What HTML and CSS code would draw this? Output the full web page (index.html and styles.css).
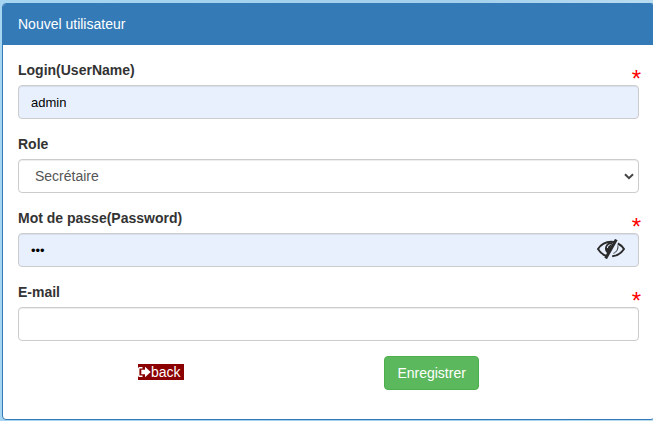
FILE: index.html
```html
<!DOCTYPE html>
<html lang="fr">
<head>
<meta charset="utf-8">
<title>Nouvel utilisateur</title>
<link rel="stylesheet" href="styles.css">
</head>
<body>
<main class="panel">
  <header class="panel-heading">Nouvel utilisateur</header>
  <form class="panel-body">
    <div class="form-group required">
      <label for="login">Login(UserName)</label>
      <input class="form-control filled" id="login" type="text" value="admin">
      <span class="mark" aria-hidden="true">*</span>
    </div>
    <div class="form-group">
      <label for="role">Role</label>
      <div class="control-wrap">
        <select class="form-control" id="role"><option>Secrétaire</option></select>
        <svg class="chevron" viewBox="0 0 10 7" aria-hidden="true"><path d="M1 1.2 5 5.2 9 1.2"/></svg>
      </div>
    </div>
    <div class="form-group required">
      <label for="password">Mot de passe(Password)</label>
      <div class="control-wrap">
        <input class="form-control filled" id="password" type="password" value="abc">
        <button class="toggle" type="button" aria-label="Afficher le mot de passe">
          <svg viewBox="0 0 28 20" aria-hidden="true">
            <path class="line" d="M9.300 17C5.600 15.600 2.800 13 1 10 4 5.500 8.500 2.800 14 2.800c1 0 2 .1 3 .3M20.800 4.500C23.400 5.700 25.500 7.700 27 10c-2.800 4.400-7 7-11.800 7.200"/>
            <path class="fill" d="M15.600 3.500A6.200 6.200 0 0 0 10.800 14.700z"/>
            <path class="glint" d="M10.300 9A3.700 3.700 0 0 1 13.500 5.500"/>
            <path class="thin" d="M20.800 6.500c.6 3.200-1 6.600-4.300 7.800"/>
            <path class="slash" d="M19.300.6 8.700 19.400"/>
          </svg>
        </button>
      </div>
      <span class="mark" aria-hidden="true">*</span>
    </div>
    <div class="form-group required">
      <label for="email">E-mail</label>
      <input class="form-control" id="email" type="email">
      <span class="mark" aria-hidden="true">*</span>
    </div>
    <div class="actions">
      <div class="back-cell">
        <a class="back" href="#"><svg viewBox="0 0 13 12" aria-hidden="true"><path class="door" d="M4.500 1.800H1.500Q.7 1.800.7 2.600V9.400Q.7 10.200 1.500 10.200H4.500"/><path class="arrow" d="M3.300 3.800H7V.8L12.700 6 7 11.200V8.200H3.300z"/></svg>back</a>
      </div>
      <div><button class="submit" type="submit">Enregistrer</button></div>
    </div>
  </form>
</main>
</body>
</html>
```
FILE: styles.css
```css
* {
  box-sizing: border-box;
}

body {
  margin: 0;
  padding: 3px 0 1px 2px;
  overflow: hidden;
  background: linear-gradient(90deg, #a5d5f1, #a3d0ec 70%, #b9dcf1);
  color: #333;
  font-family: "Liberation Sans", Arial, sans-serif;
  font-size: 14px;
  line-height: 20px;
}

/* The right border runs just past the window edge. */
.panel {
  margin-right: -2px;
  border: 1px solid #337ab7;
  border-radius: 4px;
  background: #fff;
}

.panel-heading {
  padding: 10px 15px;
  border-bottom: 1px solid #337ab7;
  border-radius: 3px 3px 0 0;
  background: #337ab7;
  color: #fff;
}

.panel-body {
  padding: 15px 15px 29px;
}

.form-group {
  position: relative;
  margin-bottom: 15px;
}

label {
  display: block;
  margin-bottom: 5px;
  font-weight: 700;
}

.control-wrap {
  position: relative;
}

.form-control {
  display: block;
  width: 100%;
  height: 34px;
  padding: 6px 12px;
  border: 1px solid #ccc;
  border-radius: 4px;
  background: #fff;
  box-shadow: inset 0 1px 1px rgba(0, 0, 0, 0.075);
  color: #555;
  font: inherit;
}

select.form-control {
  appearance: none;
  padding-left: 16px;
}

.form-control.filled {
  background: #e8f0fe;
  color: #000;
  font-size: 13px;
}

.chevron {
  position: absolute;
  top: 14px;
  right: 5px;
  width: 10px;
  height: 7px;
  fill: none;
  stroke: #444;
  stroke-width: 2;
  pointer-events: none;
}

.toggle {
  position: absolute;
  top: 6px;
  right: 14px;
  width: 28px;
  height: 20px;
  padding: 0;
  border: 0;
  background: none;
}

.toggle svg {
  display: block;
  fill: none;
  stroke: #2b2b2b;
}

.toggle .line {
  stroke-width: 2;
}

.toggle .fill {
  fill: #2b2b2b;
  stroke: none;
}

.toggle .glint {
  stroke: #e8f0fe;
}

.toggle .thin {
  stroke-width: 1;
}

.toggle .slash {
  stroke-width: 3;
}

.mark {
  position: absolute;
  top: 7px;
  right: -2px;
  color: #f00;
  font-size: 24px;
  line-height: 24px;
}

.actions {
  display: grid;
  grid-template-columns: 59fr 41fr;
  align-items: start;
}

.back-cell {
  padding: 8px 0 0 120px;
  line-height: 16px;
}

.back {
  display: inline-block;
  padding-right: 3px;
  background: #8b0000;
  color: #fff;
  text-decoration: none;
}

.back svg {
  width: 13px;
  height: 12px;
  vertical-align: -1px;
}

.door {
  fill: none;
  stroke: #fff;
  stroke-width: 1.4;
}

.arrow {
  fill: #fff;
}

.submit {
  display: block;
  height: 34px;
  padding: 6px 12px;
  border: 1px solid #4cae4c;
  border-radius: 4px;
  background: #5cb85c;
  color: #fff;
  font: inherit;
}
```
